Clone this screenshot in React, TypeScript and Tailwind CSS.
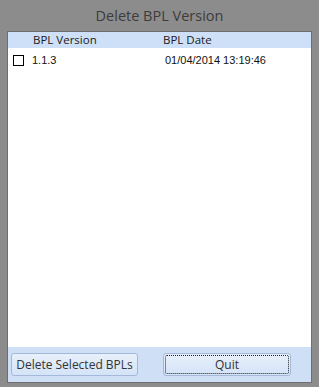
export default function App() {
  return (
    <div className="w-[319px] h-[387px] bg-[#8c8c8c] flex flex-col" style={{ fontFamily: '"Open Sans", "Noto Sans", sans-serif' }}>
      <div className="h-[31px] flex items-center justify-center text-[14.5px] text-[#3c3c3c]">
        Delete BPL Version
      </div>
      <div className="ml-[7px] mr-[7px] mb-[4px] flex-1 flex flex-col border border-[#6e6e6e] bg-[#cfe0f6]">
        <div className="h-[16px] flex items-center text-[11.5px] text-[#1a1a1a] bg-[#cde0f7]">
          <span className="ml-[25px] w-[130px]">BPL Version</span>
          <span>BPL Date</span>
        </div>
        <div className="flex-1 bg-white">
          <div className="h-[24px] flex items-center text-[11px] text-[#111]" style={{ fontFamily: '"Liberation Sans", Arial, sans-serif' }}>
            <span className="ml-[5px] w-[11px] h-[11px] border border-black bg-white" />
            <span className="ml-[8px] w-[133px]">1.1.3</span>
            <span>01/04/2014 13:19:46</span>
          </div>
        </div>
        <div className="h-[35px] flex items-center px-[3px] gap-[25px] text-[12px] text-[#333]">
          <button className="w-[127px] h-[23px] rounded-[3px] border border-[#a4b9d8] bg-gradient-to-b from-[#e8f0fb] to-[#d4e3f7]">
            Delete Selected BPLs
          </button>
          <button className="w-[128px] h-[23px] rounded-[3px] border border-[#a4b9d8] bg-gradient-to-b from-[#e8f0fb] to-[#d4e3f7] p-[1px]">
            <div className="w-full h-full border border-dotted border-[#222] rounded-[2px] flex items-center justify-center">
              Quit
            </div>
          </button>
        </div>
      </div>
    </div>
  );
}
